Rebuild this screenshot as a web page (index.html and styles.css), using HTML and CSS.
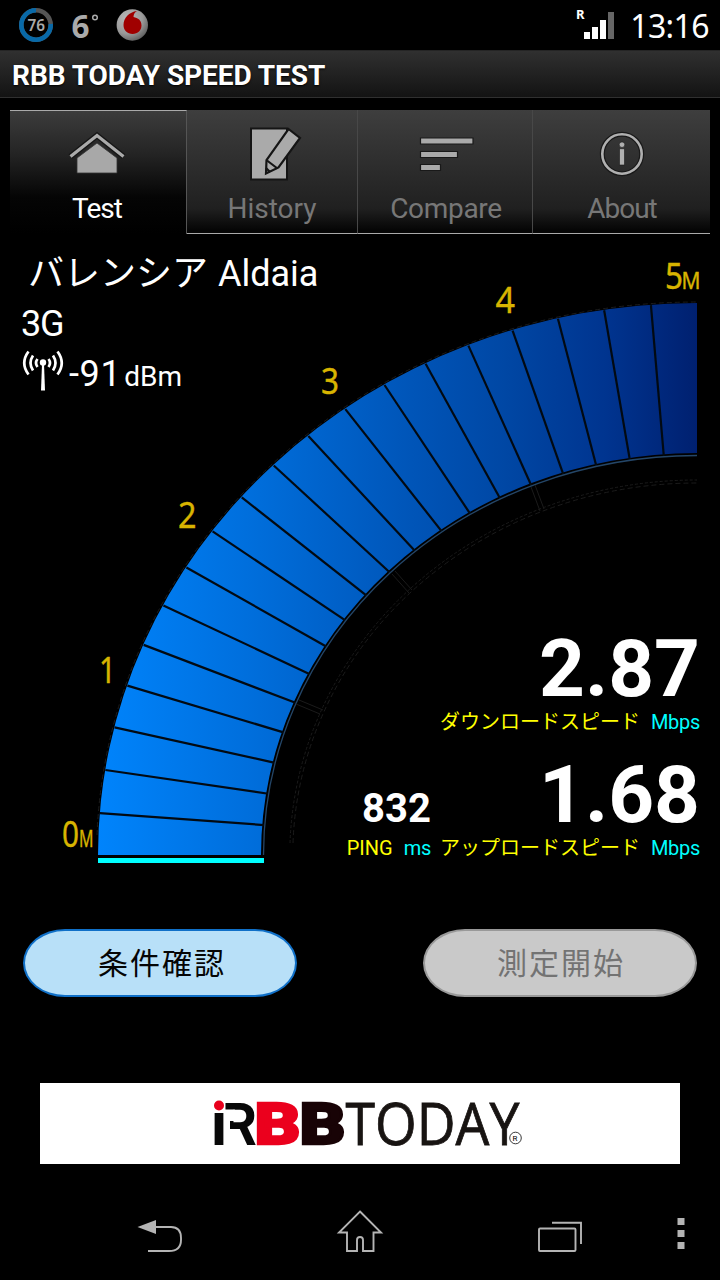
FILE: index.html
```html
<!DOCTYPE html>
<html lang="ja">
<head>
<meta charset="utf-8">
<title>RBB TODAY SPEED TEST</title>
<link rel="stylesheet" href="styles.css">
</head>
<body>
<div class="phone">
  <header class="status">
    <svg class="status-icons" viewBox="0 0 160 50" width="160" height="50">
      <defs>
        <radialGradient id="silver" cx=".35" cy=".3" r=".8"><stop offset="0" stop-color="#bbb"/><stop offset=".6" stop-color="#999"/><stop offset="1" stop-color="#555"/></radialGradient>
      </defs>
      <circle cx="36" cy="25" r="14.700" fill="none" stroke="#555" stroke-width="4.600"/>
      <path d="M36 10.300A14.700 14.700 0 1 0 50.700 24" fill="none" stroke="#0869a8" stroke-width="4.600"/>
      <text class="battery" x="27.500" y="30.500" textLength="17.500" lengthAdjust="spacingAndGlyphs">76</text>
      <text class="degrees" x="71.500" y="37.500" textLength="18" lengthAdjust="spacingAndGlyphs">6</text>
      <circle cx="95" cy="17.500" r="2.300" fill="none" stroke="#aaa" stroke-width="1.500"/>
      <circle cx="132.300" cy="25" r="15.700" fill="url(#silver)"/>
      <path d="M137 11C129 12 123.500 18 123.500 25C123.500 30.500 127.500 34 132.500 34C138 34 141.500 30 141.500 25.500C141.500 20 138 18 133.500 17C133.500 14 135 12 137 11Z" fill="#a00000"/>
    </svg>
    <div class="status-right">
      <svg viewBox="0 0 40 50" width="40" height="50">
        <text class="roam" x="1" y="18.500">R</text>
        <path d="M9 32h6v7H9zM17 27h6v12h-6zM25 20h6v19h-6z" fill="#fff"/>
        <path d="M33 12h6v27h-6z" fill="#666"/>
      </svg>
      <span class="clock">13:16</span>
    </div>
  </header>
  <h1 class="title"><span>RBB TODAY SPEED TEST</span></h1>

  <nav class="tabs">
    <a class="tab active">
      <svg viewBox="0 0 60 60" width="60" height="60">
        <path d="M3.500 27.500L30 6.500L56.500 27.500" fill="none" stroke="#161616" stroke-width="6"/>
        <path d="M3.500 27.500L30 6.500L56.500 27.500" fill="none" stroke="#aaa" stroke-width="3.200"/>
        <path d="M10 29L30 14L50 29V44H10Z" fill="#a8a8a8" stroke="#333" stroke-width=".8"/>
      </svg>
      <span>Test</span>
    </a>
    <a class="tab history">
      <svg viewBox="0 0 60 60" width="60" height="60">
        <path d="M9 -0.500H45V50.500H9Z" fill="#aaa" stroke="#151515" stroke-width="2"/>
        <path d="M46.500 0L58 9L36.500 38.500L24 44.500L24.500 31Z" fill="#aaa" stroke="#151515" stroke-width="2.200"/>
        <path d="M25 31.500L35.500 39.500M24 39L28 43" fill="none" stroke="#151515" stroke-width="2.200"/>
      </svg>
      <span>History</span>
    </a>
    <a class="tab compare">
      <svg viewBox="0 0 60 60" width="60" height="60">
        <g fill="#aaa" stroke="#191919" stroke-width="1.200"><path d="M5.500 9H58V15H5.500zM5.500 22.500H42.500V28.500H5.500zM5.500 35.500H25.500V41.500H5.500z"/></g>
      </svg>
      <span>Compare</span>
    </a>
    <a class="tab about">
      <svg viewBox="0 0 60 60" width="60" height="60">
        <circle cx="30" cy="25" r="19.700" fill="none" stroke="#191919" stroke-width="5"/>
        <circle cx="30" cy="25" r="19.700" fill="none" stroke="#b0b0b0" stroke-width="2.600"/>
        <g fill="#b0b0b0" stroke="#191919" stroke-width=".6"><circle cx="30" cy="15.700" r="2.800"/><path d="M27.500 19.700H32.500V36H27.500z"/></g>
      </svg>
      <span>About</span>
    </a>
  </nav>

  <main class="meter">
    <svg class="gauge" viewBox="0 235 720 675" width="720" height="675">
      <defs>
        <linearGradient id="blue" gradientUnits="userSpaceOnUse" x1="98" y1="0" x2="697" y2="0">
          <stop offset="0" stop-color="#0084fc"/><stop offset=".27" stop-color="#006dda"/><stop offset=".5" stop-color="#0057bb"/><stop offset=".68" stop-color="#0047a4"/><stop offset=".85" stop-color="#00348f"/><stop offset="1" stop-color="#002070"/>
        </linearGradient>
      </defs>
      <path d="M98 855A599 552 0 0 1 697 303V453A436 402 0 0 0 261 855Z" fill="url(#blue)"/>
      <g id="ticks" stroke="#020a12" stroke-width="2.200"></g>
      <path d="M97 835A600 553 0 0 1 697 302" fill="none" stroke="#1c1c1c" stroke-width="1" stroke-dasharray="5 3"/>
      <path d="M263.500 855A433.500 399.500 0 0 1 697 455.500" fill="none" stroke="#244668" stroke-width="1.300"/>
      <g fill="none" stroke="#1b1b1b" stroke-width="1">
        <path d="M290 843A407 375 0 0 1 697 480" stroke-dasharray="3 2"/>
        <path d="M293 843A404 372 0 0 1 697 483" stroke-dasharray="5 3"/>
        <path d="M296 704L320 714M299 700L323 710M392 574L409 593M395 571L412 590M531 487L540 511M535 485L544 509"/>
      </g>
      <path d="M98 860.500H264" stroke="#00ffff" stroke-width="5"/>
      <g class="scale">
        <text x="62" y="846.500" textLength="17" lengthAdjust="spacingAndGlyphs">0</text>
        <text class="unit" x="79" y="846.500" textLength="14.500" lengthAdjust="spacingAndGlyphs">M</text>
        <text x="99" y="682.500" textLength="17" lengthAdjust="spacingAndGlyphs">1</text>
        <text x="178" y="528" textLength="18.500" lengthAdjust="spacingAndGlyphs">2</text>
        <text x="321" y="394" textLength="18" lengthAdjust="spacingAndGlyphs">3</text>
        <text x="495.500" y="313" textLength="19.500" lengthAdjust="spacingAndGlyphs">4</text>
        <text x="665" y="289" textLength="18" lengthAdjust="spacingAndGlyphs">5</text>
        <text class="unit" x="681.500" y="289" textLength="19" lengthAdjust="spacingAndGlyphs">M</text>
      </g>
    </svg>
    <section class="network">
      <div class="place"><span>バレンシア</span> <span class="city">Aldaia</span></div>
      <div class="type">3G</div>
      <div class="signal">
        <svg viewBox="0 0 44 44" width="44" height="44">
          <circle cx="22" cy="12.500" r="3.200" fill="#fff"/><path d="M21 14h2L24 40.500H20Z" fill="#fff"/>
          <g fill="none" stroke="#fff" stroke-width="2.700"><path d="M16.500 9Q13.500 13 16.500 17M12 5.500Q7 13 12 20.500M7.500 1.500Q-1 13 7.500 24.500M27.500 9Q30.500 13 27.500 17M32 5.500Q37 13 32 20.500M36.500 1.500Q45 13 36.500 24.500"/></g>
        </svg>
        <span class="dbm">-91<small>dBm</small></span>
      </div>
    </section>
    <section class="results">
      <div class="result">
        <strong>2.87</strong>
        <p><span>ダウンロードスピード</span><em>Mbps</em></p>
      </div>
      <div class="pair">
        <div class="result ping"><strong>832</strong><p><span>PING</span><em>ms</em></p></div>
        <div class="result"><strong>1.68</strong><p><span>アップロードスピード</span><em>Mbps</em></p></div>
      </div>
    </section>
  </main>

  <div class="actions">
    <button class="btn check">条件確認</button>
    <button class="btn start" disabled>測定開始</button>
  </div>

  <div class="banner">
    <svg viewBox="0 0 640 81" width="640" height="81">
      <text class="logo-i" x="170" y="62">ı</text>
      <circle cx="179" cy="22.500" r="5" fill="#e9001c"/>
      <text class="logo-r" x="182" y="61.500" textLength="35" lengthAdjust="spacingAndGlyphs">R</text>
      <path d="M184 26.500H194.800V38H190V46H194.800V63H184Z" fill="#fff"/>
      <text class="black" x="214.500" y="61" textLength="46" lengthAdjust="spacingAndGlyphs" fill="#eb001d" stroke="#eb001d">B</text>
      <text class="black" x="259.500" y="61" textLength="46" lengthAdjust="spacingAndGlyphs" fill="#180306" stroke="#180306">B</text>
      <text class="today" x="305.500" y="61.500" textLength="174" lengthAdjust="spacingAndGlyphs">TODAY</text>
      <circle cx="475.500" cy="55" r="5.800" fill="#fff" stroke="#222" stroke-width=".9"/>
      <text class="reg" x="472.600" y="58.300">R</text>
    </svg>
  </div>

  <footer class="softkeys">
    <svg viewBox="0 1190 720 90" width="720" height="90">
      <g fill="none" stroke="#b4b4b4" stroke-width="1.900">
        <path d="M155 1227H171Q181 1227 181 1238V1240Q181 1251 169 1251H148"/>
        <path d="M360 1211.500L381 1232.500H373.500V1251H363V1240Q363 1237 360 1237Q357 1237 357 1240V1251H347V1232.500H339Z"/>
        <rect x="539" y="1228.500" width="36.500" height="22.500" rx="1"/>
        <path d="M552 1222.700H581V1244"/>
      </g>
      <path d="M137.500 1227L156 1220V1234Z" fill="#b4b4b4"/>
      <path d="M677.500 1218h7v7h-7zM677.500 1230h7v7h-7zM677.500 1242h7v7h-7z" fill="#b4b4b4"/>
    </svg>
  </footer>
</div>
<script src="gauge.js"></script>
</body>
</html>
```
FILE: gauge.js
```js
// Divide the dial into twenty equal segments.
const ticks = document.getElementById('ticks');
for (let i = 1; i < 20; i++) {
  const t = i * Math.PI / 40;
  const c = Math.cos(t), s = Math.sin(t);
  const line = document.createElementNS('http://www.w3.org/2000/svg', 'line');
  line.setAttribute('x1', 698 - 600 * c);
  line.setAttribute('y1', 856.5 - 553 * s);
  line.setAttribute('x2', 698 - 435 * c);
  line.setAttribute('y2', 856.5 - 401 * s);
  ticks.append(line);
}
```
FILE: styles.css
```css
* { box-sizing: border-box; }
body { margin: 0; background: #000; color: #fff; font-family: Roboto, "Noto Sans CJK JP", sans-serif; }
svg { display: block; }
.phone { width: 720px; height: 1280px; display: flex; flex-direction: column; overflow: hidden; background: #000; }

.status { height: 50px; display: flex; justify-content: space-between; }
.status-icons text { fill: #aaa; font-family: "Noto Sans", sans-serif; }
.status-icons .battery { font-size: 16px; font-weight: 600; }
.status-icons .degrees { font-size: 32px; font-weight: 700; }
.status-right { display: flex; padding-right: 11px; gap: 15px; }
.roam { fill: #fff; font: 700 13px "Noto Sans", sans-serif; }
.clock { font: 400 32px/52px "Noto Sans", sans-serif; letter-spacing: -.6px; }

.title { margin: 0; height: 48px; padding-left: 12px; border-top: 1px solid #252525; border-bottom: 1px solid #303030; background: linear-gradient(#303030, #131313); font-size: 28px; line-height: 49px; font-weight: 700; letter-spacing: -.05px; text-shadow: 0 1px 2px #000; }

.tabs { height: 124px; margin: 12px 10px 0; display: grid; grid-template-columns: 177px 171px 175px 177px; }
.tab { display: flex; flex-direction: column; align-items: center; padding-top: 19px; color: #777; font-size: 28px; line-height: 32px; background: linear-gradient(#3e3e3e, #202020 80%, #050505 98%); border-bottom: 1px solid #aaa; border-right: 1px solid #484848; }
.tab:last-child { border-right: 0; }
.tab.active { color: #fff; padding-right: 2px; background: linear-gradient(#3c3c3c, #242424 35%, #050505 70%, #000); border-top: 1px solid #aaa; border-bottom: 0; border-right: 1px solid #555; letter-spacing: -1px; }
.tab.active svg { margin-top: -1px; }
.tab svg { overflow: visible; margin-bottom: 4px; }
.compare { letter-spacing: -.3px; }
.compare span { padding-left: 2px; }
.about { letter-spacing: -1px; }
.about span { padding-left: 1px; }

.meter { height: 676px; padding-top: 1px; display: grid; grid-template-columns: 340px 380px; grid-template-rows: 385px 290px; }
.gauge { grid-area: 1 / 1 / 3 / 3; }
.scale text { fill: #d8b400; stroke: #d8b400; stroke-width: .4px; font: 400 36px "Noto Sans", sans-serif; }
.scale .unit { font-size: 24px; }
.network { grid-area: 1 / 1; padding: 18px 0 0 21px; font-size: 36px; line-height: 42px; white-space: nowrap; z-index: 1; }
.place { padding-left: 7px; }
.city { padding-left: 1px; }
.type { margin-top: 8px; letter-spacing: -1.3px; }
.signal { display: flex; margin-top: 5px; }
.dbm { padding-top: 3px; margin-left: 4px; letter-spacing: .6px; }
.dbm small { font-size: 28px; padding-left: 3px; letter-spacing: 0; }
.results { grid-area: 2 / 2; z-index: 1; display: flex; flex-direction: column; align-items: flex-end; padding: 9px 20px 0 0; }
.result { text-align: right; white-space: nowrap; height: 126px; }
.result strong { display: block; font-size: 80px; line-height: 80px; font-weight: 700; }
.result p { margin: 0; font-size: 20px; line-height: 26px; color: #ff0; display: flex; justify-content: flex-end; gap: 11px; }
.result em { color: #0ff; font-style: normal; letter-spacing: -.3px; }
.pair { display: flex; gap: 9px; }
.ping strong { font-size: 40px; padding-top: 14px; height: 80px; }

.actions { display: flex; justify-content: space-between; padding: 19px 23px 0; height: 87px; }
.btn { width: 274px; height: 68px; border: 2px solid #1070c8; border-radius: 42px / 34px; background: #b8e0f8; color: #050505; font: 400 30px/60px "Noto Sans CJK JP", sans-serif; letter-spacing: 2px; padding: 0 0 5px 4px; }
.btn.start { border-color: #999; background: #c9c9c9; color: #737373; padding-left: 2px; }

.banner { width: 640px; height: 81px; margin: 86px 40px 0; background: #fff; }
.logo-i { font: 700 59px "Open Sans", sans-serif; fill: #080808; }
.logo-r { font: 700 59px Roboto, sans-serif; fill: #080808; }
.black { font: 900 58px Roboto, sans-serif; stroke-width: 2.5px; }
.today { font: 400 59px "Open Sans", sans-serif; fill: #181412; stroke: #181412; stroke-width: .8px; }
.reg { font: 400 8px Roboto, sans-serif; }
.softkeys { margin-top: 26px; height: 90px; }
```
